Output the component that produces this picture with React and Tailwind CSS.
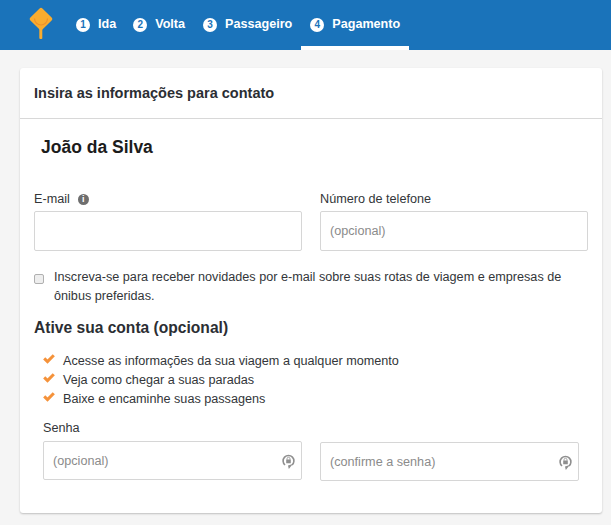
function Step({ n, label, active, className = "" }) {
  return (
    <div className={`relative flex h-[50px] items-center gap-2 px-[9px] ${active ? "border-b-4 border-white pt-[3px]" : "pb-[1px]"} ${className}`}>
      <span className="flex h-[14px] w-[14px] items-center justify-center rounded-full bg-white text-[10px] font-bold leading-none text-[#1a73ba]">{n}</span>
      <span className="text-[12.6px] font-bold text-white">{label}</span>
    </div>
  );
}
function Lock() {
  return (
    <svg viewBox="0 0 13 15" className="h-[15px] w-[13px]" fill="none">
      <path d="M3 11A5.4 5.4 0 1 1 10 11" stroke="#8f8f8f" strokeWidth="1.6" />
      <path d="M10.8 10 6 11.4 6.8 15Z" fill="#8f8f8f" />
      <rect x="4.2" y="5.6" width="4.6" height="3.6" rx=".5" fill="#8f8f8f" />
      <path d="M5 5.8V4.8a1.5 1.5 0 0 1 3 0V5.8" stroke="#8f8f8f" strokeWidth=".8" />
    </svg>
  );
}
function Check() {
  return (
    <svg viewBox="0 0 12 10" className="mt-[-5px] h-[10px] w-[12px] shrink-0">
      <path d="M1.2 4.4 4.5 7.6 10.8 1.2" fill="none" stroke="#f5923a" strokeWidth="3" />
    </svg>
  );
}
function Field({ placeholder, icon, className }) {
  return (
    <div className={`flex items-center justify-between rounded-[2px] border border-[#d6d6d6] bg-white pl-[9px] pr-[6px] pt-[1px] text-[12.65px] text-[#8b8b8b] ${className}`}>
      <span>{placeholder}</span>
      {icon && <Lock />}
    </div>
  );
}
export default function App() {
  return (
    <div className="min-h-[525px] bg-[#f5f5f5] font-['Liberation_Sans',Arial,sans-serif] text-[#333639]">
      <header className="flex h-[50px] items-center bg-[#1a73ba]">
        <div className="ml-[28px] mr-[-1px] flex h-[50px] w-[40px] shrink-0 items-start pt-[7px]">
          <svg viewBox="0 0 26 33" className="h-[33px] w-[26px]">
            <rect x="11.3" y="18" width="3" height="14" rx="1" fill="#f9ac2f" />
            <rect x="4.5" y="3.5" width="17" height="17" rx="2" transform="rotate(45 13 12)" fill="#f9ac2f" />
            <path d="M6.5 11.5a6.5 6.5 0 0 0 13 0" fill="none" stroke="#ee8f2c" strokeWidth="1.2" />
          </svg>
        </div>
        <Step n="1" label="Ida" className="mr-[-1px]" />
        <Step n="2" label="Volta" />
        <Step n="3" label="Passageiro" />
        <Step n="4" label="Pagamento" active />
      </header>
      <main className="px-5 pt-[18px]">
        <section className="h-[445px] w-[582px] rounded-[3px] bg-white shadow-[0_1px_2px_rgba(0,0,0,0.22)]">
          <h2 className="flex h-[51px] items-center border-b border-[#d8d8d8] pl-[14px] pt-[2px] text-[14.5px] font-bold text-[#2b2e33]">Insira as informações para contato</h2>
          <div className="pl-[21px] pt-[18px] text-[17.5px] font-bold leading-[21px] text-[#1c1c1c]">João da Silva</div>
          <div className="mt-[32px] flex gap-[18px] px-[14px]">
            <div className="w-[268px]">
              <div className="flex h-[18px] items-center gap-[8px] text-[12.65px]">
                E-mail
                <span className="flex h-[11px] w-[11px] items-center justify-center rounded-full bg-[#6e6e6e] text-[9px] font-bold leading-none text-white">i</span>
              </div>
              <Field className="mt-[3px] h-[40px]" />
            </div>
            <div className="w-[268px]">
              <div className="flex h-[18px] items-center text-[12.65px]">Número de telefone</div>
              <Field className="mt-[3px] h-[40px]" placeholder="(opcional)" />
            </div>
          </div>
          <div className="mt-[17px] flex pl-[14px] pr-[20px] text-[12.65px] leading-[19px]">
            <span className="mr-[10px] mt-[6px] h-[10px] w-[10px] shrink-0 rounded-[2px] border border-[#b0b0b0] bg-[#eeeeee]" />
            <p>Inscreva-se para receber novidades por e-mail sobre suas rotas de viagem e empresas de ônibus preferidas.</p>
          </div>
          <h3 className="mt-[12px] pl-[14px] text-[15.6px] font-bold leading-[20px] text-[#2b2e33]">Ative sua conta (opcional)</h3>
          <ul className="mt-[14px] pl-[23px] text-[12.65px] leading-[19px]">
            <li className="flex items-center gap-[8px]"><Check />Acesse as informações da sua viagem a qualquer momento</li>
            <li className="flex items-center gap-[8px]"><Check />Veja como chegar a suas paradas</li>
            <li className="flex items-center gap-[8px]"><Check />Baixe e encaminhe suas passagens</li>
          </ul>
          <div className="mt-[10px] pl-[23px] text-[12.65px] leading-[18px]">Senha</div>
          <div className="mt-[4px] flex items-start gap-[18px] pl-[23px]">
            <Field className="h-[39px] w-[259px]" placeholder="(opcional)" icon />
            <Field className="mt-[1px] h-[39px] w-[259px]" placeholder="(confirme a senha)" icon />
          </div>
        </section>
      </main>
    </div>
  );
}
